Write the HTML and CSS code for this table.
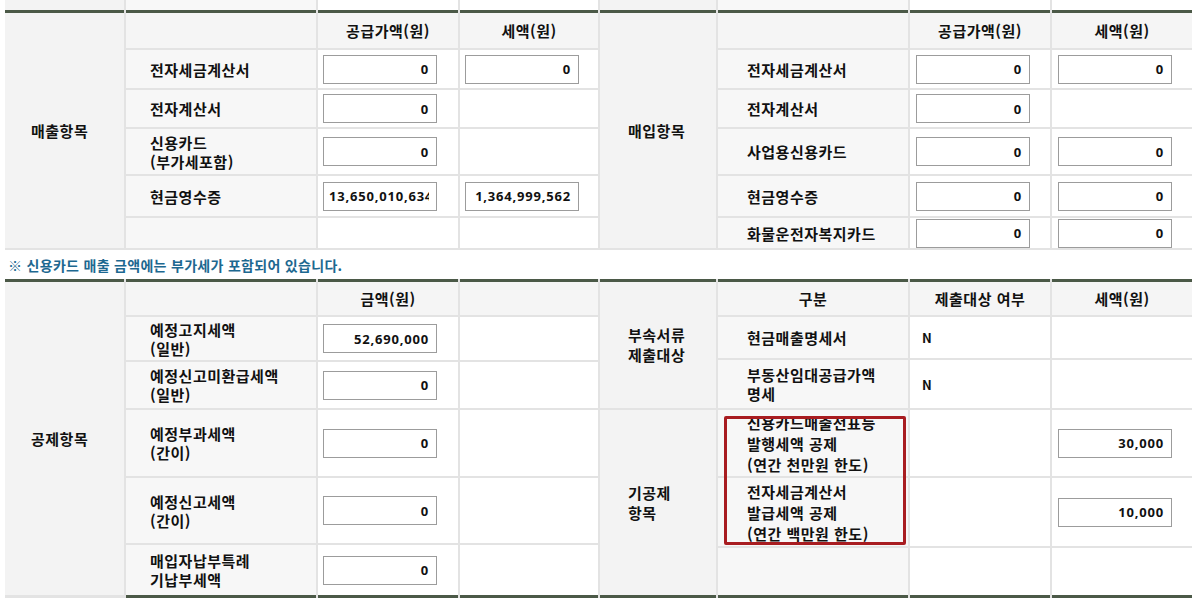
FILE: index.html
```html
<!DOCTYPE html>
<html lang="ko">
<head>
<meta charset="utf-8">
<title>부가세 신고</title>
<link rel="stylesheet" href="styles.css">
</head>
<body>
<div class="page">
  <div class="pair stub">
    <div class="grid left"><div class="s-lab"></div><div class="s-item"></div><div class="s-val"></div><div class="s-val"></div></div>
    <div class="grid right"><div class="s-lab"></div><div class="s-item"></div><div class="s-val"></div><div class="s-val"></div></div>
  </div>

  <div class="pair top">
    <div class="grid left">
      <div class="lab span6">매출항목</div>
      <div class="hd item-hd"></div><div class="hd">공급가액(원)</div><div class="hd">세액(원)</div>
      <div class="item">전자세금계산서</div><div class="val"><input class="num" value="0"></div><div class="val"><input class="num" value="0"></div>
      <div class="item">전자계산서</div><div class="val"><input class="num" value="0"></div><div class="val"></div>
      <div class="item">신용카드<br>(부가세포함)</div><div class="val"><input class="num" value="0"></div><div class="val"></div>
      <div class="item">현금영수증</div><div class="val"><input class="num" value="13,650,010,634"></div><div class="val"><input class="num" value="1,364,999,562"></div>
      <div class="item"></div><div class="val"></div><div class="val"></div>
    </div>
    <div class="grid right">
      <div class="lab span6">매입항목</div>
      <div class="hd item-hd"></div><div class="hd">공급가액(원)</div><div class="hd">세액(원)</div>
      <div class="item">전자세금계산서</div><div class="val"><input class="num" value="0"></div><div class="val"><input class="num" value="0"></div>
      <div class="item">전자계산서</div><div class="val"><input class="num" value="0"></div><div class="val"></div>
      <div class="item">사업용신용카드</div><div class="val"><input class="num" value="0"></div><div class="val"><input class="num" value="0"></div>
      <div class="item">현금영수증</div><div class="val"><input class="num" value="0"></div><div class="val"><input class="num" value="0"></div>
      <div class="item">화물운전자복지카드</div><div class="val"><input class="num" value="0"></div><div class="val"><input class="num" value="0"></div>
    </div>
  </div>

  <p class="notice">※ 신용카드 매출 금액에는 부가세가 포함되어 있습니다.</p>

  <div class="pair bottom">
    <div class="grid left">
      <div class="lab span6 lab-end">공제항목</div>
      <div class="hd item-hd"></div><div class="hd">금액(원)</div><div class="hd"></div>
      <div class="item">예정고지세액<br>(일반)</div><div class="val"><input class="num" value="52,690,000"></div><div class="val"></div>
      <div class="item">예정신고미환급세액<br>(일반)</div><div class="val"><input class="num" value="0"></div><div class="val"></div>
      <div class="item">예정부과세액<br>(간이)</div><div class="val"><input class="num" value="0"></div><div class="val"></div>
      <div class="item">예정신고세액<br>(간이)</div><div class="val"><input class="num" value="0"></div><div class="val"></div>
      <div class="item last">매입자납부특례<br>기납부세액</div><div class="val last"><input class="num" value="0"></div><div class="val last"></div>
    </div>
    <div class="grid right">
      <div class="lab span3">부속서류<br>제출대상</div>
      <div class="hd">구분</div><div class="hd">제출대상 여부</div><div class="hd">세액(원)</div>
      <div class="item">현금매출명세서</div><div class="val yn">N</div><div class="val"></div>
      <div class="item">부동산임대공급가액<br>명세</div><div class="val yn">N</div><div class="val"></div>
      <div class="lab span3 sub last">기공제<br>항목</div>
      <div class="item tall">신용카드매출전표등<br>발행세액 공제<br>(연간 천만원 한도)</div><div class="val"></div><div class="val"><input class="num" value="30,000"></div>
      <div class="item tall">전자세금계산서<br>발급세액 공제<br>(연간 백만원 한도)</div><div class="val"></div><div class="val"><input class="num" value="10,000"></div>
      <div class="item last"></div><div class="val last"></div><div class="val last"></div>
      <div class="mark"></div>
    </div>
  </div>
</div>
</body>
</html>
```

FILE: styles.css
```css
* { box-sizing: border-box; }
body {
  margin: 0;
  background: #fff;
  color: #111;
  font-family: "Noto Sans CJK KR", "Noto Sans", sans-serif;
  font-size: 15px;
}
.page { width: 1199px; padding-left: 5px; }
.pair { display: flex; }

.grid {
  display: grid;
  column-gap: 2px;
  row-gap: 2px;
  background: #e3e3e3;
  position: relative;
}
.grid.left { grid-template-columns: 119px 190px 140px 138px; padding-right: 2px; }
.grid.right { grid-template-columns: 116px 190px 140px 140px; }

.stub .grid { grid-template-rows: 10px; }
.s-lab { background: #f3f3f3; }
.s-item { background: #f8f8f8; }
.s-val { background: #fff; }

.top .grid { grid-template-rows: 38px 38px 37px 45px 40px 30px; padding-bottom: 2px; }
.bottom .grid.left { grid-template-rows: 36px 43px 46px 66px 65px 53px; }
.bottom .grid.right { grid-template-rows: 36px 41px 48px 66px 68px 50px; }

.lab {
  background: #f3f3f3;
  border-top: 3px solid #4b5947;
  display: flex;
  align-items: center;
  padding-left: 26px;
  font-weight: 700;
  line-height: 20px;
  letter-spacing: 0.5px;
}
.right .lab { padding-left: 28px; }
.span6 { grid-row: span 6; }
.span3 { grid-row: span 3; }
.lab.sub { border-top: 0; }
.lab-end { border-bottom: 3px solid #e3e3e3; }

.hd {
  background: #f5f5f5;
  border-top: 3px solid #4b5947;
  display: flex;
  align-items: center;
  justify-content: center;
  font-weight: 700;
  letter-spacing: 0.5px;
}

.item {
  background: #f7f7f7;
  display: flex;
  align-items: center;
  padding-left: 24px;
  font-weight: 700;
  line-height: 19px;
  letter-spacing: 0.5px;
}
.right .item { padding-left: 29px; }
.item.tall { line-height: 21px; }

.val {
  background: #fff;
  display: flex;
  align-items: center;
  padding-left: 5px;
}
.right .val { padding-left: 6px; }
.yn { font-weight: 700; font-size: 13px; padding-left: 12px; }
.right .yn { padding-left: 12px; }

.last { border-bottom: 3px solid #4b5947; }

.num {
  width: 114px;
  height: 29px;
  margin: 0;
  border: 1px solid #9c9c9c;
  background: #fff;
  text-align: right;
  padding: 0 7px 0 5px;
  font-family: "Noto Sans", sans-serif;
  font-weight: 700;
  font-size: 13px;
  letter-spacing: 0.8px;
  color: #111;
}

.notice {
  margin: 0;
  height: 29px;
  padding: 5px 0 0 3px;
  color: #1d6890;
  font-weight: 700;
  font-size: 14px;
  line-height: 20px;
  letter-spacing: 0.3px;
}

.mark {
  position: absolute;
  left: 124px;
  top: 137px;
  width: 182px;
  height: 129px;
  border: 3px solid #a81c20;
  border-radius: 2px;
  pointer-events: none;
}
```
